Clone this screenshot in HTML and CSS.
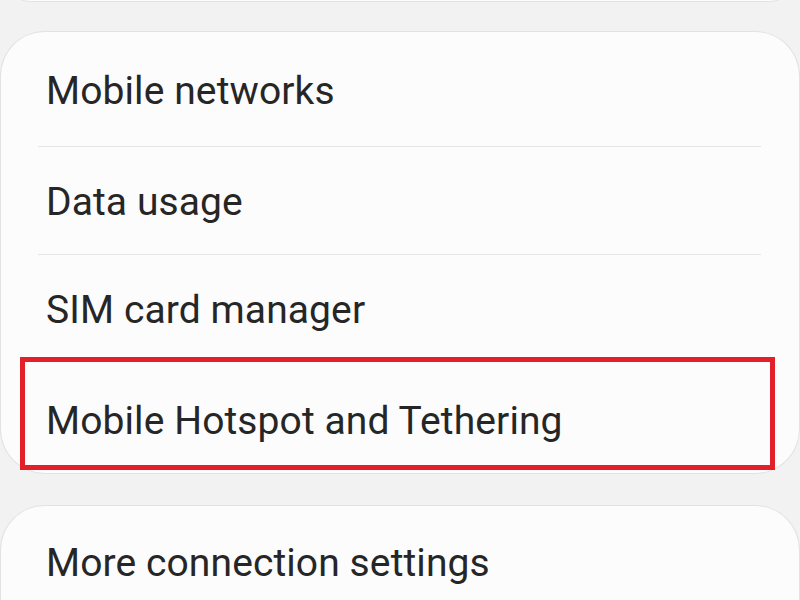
FILE: index.html
```html
<!DOCTYPE html>
<html>
<head>
<meta charset="utf-8">
<link rel="stylesheet" href="styles.css">
</head>
<body>
<div class="page">
  <div class="card card-prev"></div>
  <div class="card card-main">
    <div class="row row-first"><span class="label">Mobile networks</span></div>
    <div class="divider"></div>
    <div class="row"><span class="label">Data usage</span></div>
    <div class="divider"></div>
    <div class="row"><span class="label">SIM card manager</span></div>
    <div class="row row-last highlighted">
      <span class="label">Mobile Hotspot and Tethering</span>
      <div class="highlight-box"></div>
    </div>
  </div>
  <div class="card card-more">
    <div class="row"><span class="label">More connection settings</span></div>
  </div>
</div>
</body>
</html>
```

FILE: styles.css
```css
html, body {
  margin: 0;
  padding: 0;
  background: #f2f2f2;
  width: 800px;
  height: 600px;
  overflow: hidden;
}

.page {
  display: flex;
  flex-direction: column;
  padding: 0 1px;
}

.card {
  background: #fcfcfc;
  border-radius: 44px;
  box-shadow: 0 0 0 1px #e2e2e2;
}

.card-prev {
  height: 60px;
  margin-top: -59px;
}

.card-main {
  margin-top: 31px;
  padding-top: 4px;
}

.card-more {
  margin-top: 33px;
  height: 200px;
}

.row {
  position: relative;
  height: 107px;
  box-sizing: border-box;
  display: flex;
  align-items: center;
  padding-left: 45px;
  padding-top: 3px;
}

.row-first {
  height: 110px;
  padding-top: 0;
}

.row-last {
  height: 111px;
  padding-top: 6px;
}

.card-more .row {
  height: 110px;
  padding-top: 3px;
}

.label {
  font-family: Roboto, "Noto Sans", sans-serif;
  font-size: 39px;
  color: #262626;
  letter-spacing: 0.1px;
}

.divider {
  height: 1px;
  background: #e6e6e6;
  margin: 0 38px 0 37px;
}

.highlight-box {
  position: absolute;
  left: 19px;
  right: 24px;
  top: -5px;
  bottom: 3px;
  border: 5px solid #e3202a;
}
```
